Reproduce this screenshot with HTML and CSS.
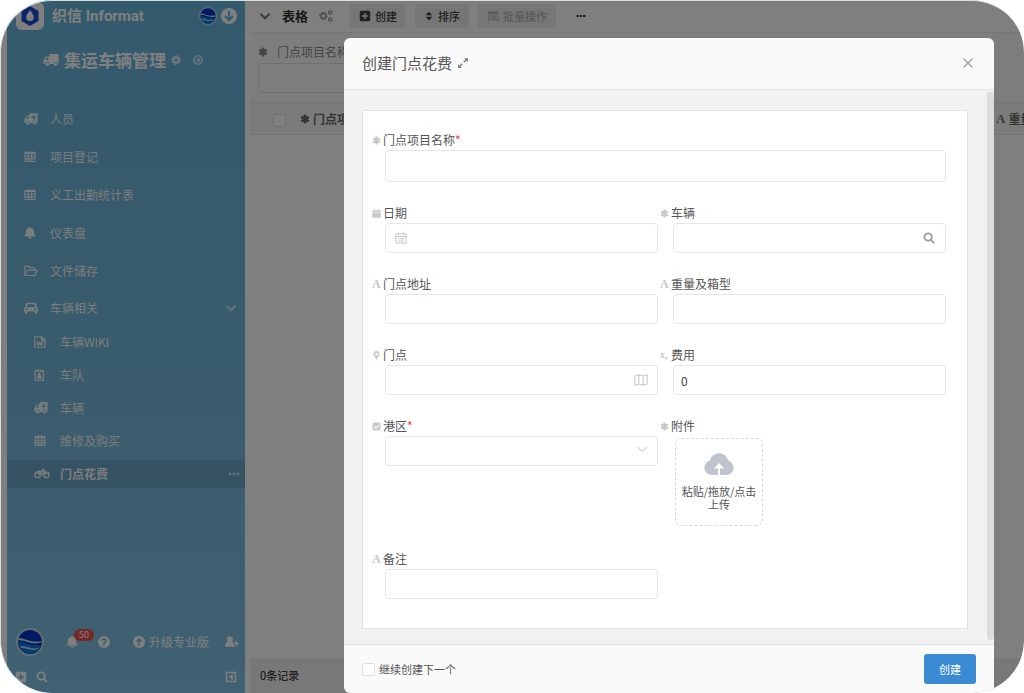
FILE: index.html
```html
<!DOCTYPE html>
<html lang="zh-CN">
<head>
<meta charset="utf-8">
<title>集运车辆管理</title>
<link rel="stylesheet" href="styles.css">
</head>
<body>
<svg class="sprite" aria-hidden="true">
  <symbol id="truck" viewBox="0 0 16 16"><path d="M6.500 2h9v10h-1a2 2 0 0 1-4 0h-4a2 2 0 0 1-4 0H.5V8L3 4.500h3.500z"/><path d="M2 8l1.600-2.300H5.300V8z" fill="#6ab6dc"/><circle cx="4.500" cy="12.300" r="2" stroke="#6ab6dc" stroke-width=".8"/><circle cx="12.500" cy="12.300" r="2" stroke="#6ab6dc" stroke-width=".8"/></symbol>
  <symbol id="ambulance" viewBox="0 0 16 16"><path d="M6.500 1.500h9v11h-1.500H.5V8L3 4h3.500z"/><path d="M2 7.500l1.600-2.300H5.300V7.500zM10.400 3.500h1.300v2h2v1.300h-2v2h-1.300v-2h-2V5.500h2z" fill="#6ab6dc"/><circle cx="4.500" cy="12.500" r="2.200" stroke="#6ab6dc" stroke-width=".6"/><circle cx="12" cy="12.500" r="2.200" stroke="#6ab6dc" stroke-width=".6"/></symbol>
  <symbol id="table" viewBox="0 0 16 16"><path fill-rule="evenodd" d="M2 1h12a1.500 1.500 0 0 1 1.500 1.500v10.500a1.500 1.500 0 0 1-1.500 1.500H2A1.500 1.500 0 0 1 .5 13V2.500A1.500 1.500 0 0 1 2 1zM2 4v2.200h3V4zM6.500 4v2.200h3V4zM11 4v2.200h3V4zM2 7.700v2h3v-2zM6.500 7.700v2h3v-2zM11 7.700v2h3v-2zM2 11.200v2h3v-2zM6.500 11.200v2h3v-2zM11 11.200v2h3v-2z"/></symbol>
  <symbol id="bell" viewBox="0 0 16 16"><path d="M7 1a1 1 0 0 1 2 0c3 .5 4.300 2.500 4.300 5 0 3.500 1 5 2.700 6.800H0C1.700 11 2.700 9.500 2.700 6c0-2.500 1.300-4.500 4.300-5z"/><path d="M5.700 13.300h4.600a2.300 2.300 0 0 1-4.600 0z"/></symbol>
  <symbol id="folder" viewBox="0 0 16 16"><path fill="none" stroke="currentColor" stroke-width="1.300" stroke-linejoin="round" d="M1 12.500V3.500A1 1 0 0 1 2 2.500h3l1.500 1.500H11a1 1 0 0 1 1 1v2M1 12.800L4 7.500a1 1 0 0 1 1-.5h10.200L12.500 12.500a1.500 1.500 0 0 1-1 .7H1.500z"/></symbol>
  <symbol id="car" viewBox="0 0 16 16"><path fill-rule="evenodd" d="M4 2h8c1 0 1.600.4 1.900 1.400L14.700 7c.8.300 1.300 1 1.300 1.900V12h-1v1.500a1.300 1.300 0 0 1-2.600 0V12H3.600v1.500a1.300 1.300 0 0 1-2.600 0V12H0V8.900C0 8 .5 7.300 1.300 7l.8-3.600C2.400 2.400 3 2 4 2zM4.100 3.700L3.300 6.800h9.400l-.8-3.100zM3 8.300a1.200 1.200 0 1 0 0 2.400 1.200 1.200 0 0 0 0-2.400zM13 8.300a1.200 1.200 0 1 0 0 2.400 1.200 1.200 0 0 0 0-2.400z"/></symbol>
  <symbol id="word" viewBox="0 0 16 16"><path fill="none" stroke="currentColor" stroke-width="1.600" stroke-linejoin="round" d="M1 1h9l4.500 4v10H1zM10 1v4.500h4M4 7l1.500 5.500L7.800 8l2.200 4.500L11.500 7"/></symbol>
  <symbol id="badge" viewBox="0 0 16 16"><path fill="none" stroke="currentColor" stroke-width="1.600" d="M1.500 2.500h11v12.500h-11z"/><path d="M3 .5h2.500v3H3zM8.500 .5H11v3H8.500zM3.500 12.500c0-2 .8-3.300 2-3.500a2.200 2.200 0 1 1 3 0c1.200.2 2 1.500 2 3.500z"/></symbol>
  <symbol id="moto" viewBox="0 0 18 16"><g fill="none" stroke="currentColor" stroke-width="1.500"><circle cx="4" cy="9" r="3"/><circle cx="14" cy="9" r="3"/><path d="M4 9l3-4h5M8.500 3H11l3 6M3 5.500c3-1.500 5 0 5.500 3.500L12 5"/></g></symbol>
  <symbol id="chevron" viewBox="0 0 16 16"><path fill="none" stroke="currentColor" stroke-width="2.600" d="M2 5l6 6 6-6"/></symbol>
  <symbol id="chevron-thin" viewBox="0 0 16 16"><path fill="none" stroke="currentColor" stroke-width="1.600" d="M1 5l7 7 7-7"/></symbol>
  <symbol id="dots" viewBox="0 0 16 16"><path d="M1 6.300h3.500v3.400H1zM6.250 6.300h3.500v3.400h-3.500zM11.500 6.300H15v3.400h-3.500z"/></symbol>
  <symbol id="gear" viewBox="0 0 16 16"><circle cx="8" cy="8" r="4.200" fill="none" stroke="currentColor" stroke-width="3.400"/><circle cx="8" cy="8" r="6.800" fill="none" stroke="currentColor" stroke-width="2.200" stroke-dasharray="2.800 2.540"/></symbol>
  <symbol id="gears" viewBox="0 0 16 16"><g fill="none" stroke="currentColor"><circle cx="5" cy="8" r="2.800" stroke-width="1.700"/><circle cx="5" cy="8" r="4.200" stroke-width="1.300" stroke-dasharray="1.600 1.700"/><circle cx="12.800" cy="4" r="1.900" stroke-width="1.600"/><circle cx="12.800" cy="12" r="1.900" stroke-width="1.600"/></g></symbol>
  <symbol id="circle-right" viewBox="0 0 16 16"><path fill="none" stroke="currentColor" stroke-width="2" d="M8 1.200a6.800 6.800 0 1 0 .1 0zM4 8h7M8 4.800L11.200 8 8 11.200"/></symbol>
  <symbol id="circle-down" viewBox="0 0 16 16"><circle cx="8" cy="8" r="8"/><path fill="none" stroke="#6ab6dc" stroke-width="2" d="M8 3v9M4 8l4 4 4-4"/></symbol>
  <symbol id="circle-up" viewBox="0 0 16 16"><circle cx="8" cy="8" r="8"/><path fill="none" stroke="#7abce0" stroke-width="2" d="M8 13V4M4.500 7.500L8 4l3.500 3.500"/></symbol>
  <symbol id="question" viewBox="0 0 16 16"><circle cx="8" cy="8" r="8"/><path fill="none" stroke="#7abce0" stroke-width="2" d="M5.300 6.200c.2-3.200 5.400-3 5.300 0C10.500 8 8 7.800 8 10.200M8 11.200v2"/></symbol>
  <symbol id="user-plus" viewBox="0 0 16 16"><path d="M5.500 1.500a3.300 3.300 0 0 1 2.200 5.900C10.200 8 11 10 11 13.500H0C0 10 .8 8 3.300 7.400A3.300 3.300 0 0 1 5.500 1.500z"/><path d="M11.800 6.500H14v2.100h2v2.200h-2v2.100h-2.200v-2.100H9.700V8.600h2.100z" stroke="#7abce0" stroke-width=".5"/></symbol>
  <symbol id="plus-square" viewBox="0 0 16 16"><path fill-rule="evenodd" d="M3 1h10a2 2 0 0 1 2 2v10a2 2 0 0 1-2 2H3a2 2 0 0 1-2-2V3a2 2 0 0 1 2-2zM7 4v3H4v2h3v3h2V9h3V7H9V4z"/></symbol>
  <symbol id="check-square" viewBox="0 0 16 16"><path d="M3 1h10a2 2 0 0 1 2 2v10a2 2 0 0 1-2 2H3a2 2 0 0 1-2-2V3a2 2 0 0 1 2-2z"/><path d="M4 8l3 3 5.500-5.500" fill="none" stroke="#fff" stroke-width="2"/></symbol>
  <symbol id="search" viewBox="0 0 16 16"><path fill="none" stroke="currentColor" stroke-width="2.300" d="M6.800 1.800a4.900 4.900 0 1 0 .1 0zM10.300 10.300l4.700 4.700"/></symbol>
  <symbol id="collapse" viewBox="0 0 16 16"><path fill="none" stroke="currentColor" stroke-width="2" d="M2 2h12v12H2z"/><path d="M10.500 4v8L5 8z"/></symbol>
  <symbol id="asterisk" viewBox="0 0 16 16"><path fill="none" stroke="currentColor" stroke-width="4.400" stroke-linecap="round" d="M8 2.800v10.400M3.500 5.400l9 5.200M3.500 10.600l9-5.200"/></symbol>
  <symbol id="sort" viewBox="0 0 16 16"><path d="M2.500 6.800L8 1l5.500 5.800zM2.500 9.200L8 15l5.500-5.800z"/></symbol>
  <symbol id="list" viewBox="0 0 16 16"><path fill-rule="evenodd" d="M1 2h14v12H1zM2.500 5v7.500h11V5zM4 6h1.500v1.400H4zM6.500 6H12v1.400H6.500zM4 8.200h1.500v1.400H4zM6.500 8.200H12v1.400H6.500zM4 10.300h1.500v1.400H4zM6.500 10.300H12v1.400H6.500z"/></symbol>
  <symbol id="expand" viewBox="0 0 16 16"><path d="M9.500 1.500h5V6.500zM1.500 9.500v5h5z"/><path fill="none" stroke="currentColor" stroke-width="1.800" d="M12.500 3.500L9 7M3.500 12.500L7 9"/></symbol>
  <symbol id="close" viewBox="0 0 16 16"><path fill="none" stroke="currentColor" stroke-width="1.500" d="M2 2l12 12M14 2L2 14"/></symbol>
  <symbol id="calendar" viewBox="0 0 16 16"><path d="M.5 2.500H3V.5h2.500v2h5v-2H13v2h2.500v3.200H.5zM.5 6.500h15V15.500H.5z"/></symbol>
  <symbol id="date" viewBox="0 0 16 16"><path fill="none" stroke="currentColor" stroke-width="1.300" d="M1.200 2.500h13.600v12.300H1.200zM1.200 6h13.600M4.500.7v3.500M11.500.7v3.500M4 9h8M4 12h8"/></symbol>
  <symbol id="pin" viewBox="0 0 16 16"><path fill-rule="evenodd" d="M8 0a5.500 5.500 0 0 1 5.500 5.500C13.500 9 9.500 11 8.600 15.500H7.400C6.500 11 2.500 9 2.500 5.500A5.500 5.500 0 0 1 8 0zM8 3.300a2.300 2.300 0 1 0 .1 0z"/></symbol>
  <symbol id="map" viewBox="0 0 16 14"><path fill="none" stroke="currentColor" stroke-width="1.300" stroke-linejoin="round" d="M1 2.500L5.500 1l5 1.500L15 1v10.500L10.500 13l-5-1.500L1 13zM5.500 1v10.500M10.500 2.500V13"/></symbol>
  <symbol id="cloud" viewBox="0 0 30 24"><path d="M7.500 23A7.300 7.300 0 0 1 6 8.600 9.200 9.200 0 0 1 24 8.600 7.300 7.300 0 0 1 22.500 23z"/><path fill="#fff" d="M15 11l5 5.500h-4V23h-2v-6.500h-4z"/></symbol>
  <symbol id="globe" viewBox="0 0 28 28"><circle cx="14" cy="14" r="14" fill="#c2dbe8"/><circle cx="14" cy="14" r="12" fill="#0034c8"/><path fill="#0a78e0" d="M2 13.500c7 0 12 5 23.500 3.500-1.500 5-6 8.700-11.500 8.700S3 21 2 13.500z"/><path fill="#c2dbe8" d="M2.500 10c6-.5 12 5.500 23.200 3v1.600C15 17.500 9 11.500 2.300 12.200zM4.500 18.500c6-1 11 4 18.500 1l-1 1.600c-7 2.500-12-1.400-17-1z"/></symbol>
</svg>

<div class="frame">
  <aside class="side">
    <header class="brand">
      <svg class="brand-logo" viewBox="0 0 28 28"><rect width="28" height="28" rx="6" fill="#fff"/><path d="M14 4l8.500 5v10L14 24l-8.500-5V9z" fill="#2148d8"/><path d="M14 8c2 3 3.800 5 3.800 7.200a3.800 3.800 0 0 1-7.600 0C10.200 13 12 11 14 8z" fill="#fff"/></svg>
      <strong class="brand-name">织信 Informat</strong>
      <svg class="icon i18"><use href="#globe"/></svg>
      <svg class="icon i16"><use href="#circle-down"/></svg>
    </header>
    <h1 class="app-name">
      <svg class="icon i16"><use href="#truck"/></svg>集运车辆管理<svg class="icon i10 dim"><use href="#gear"/></svg><svg class="icon i10 dim last"><use href="#circle-right"/></svg>
    </h1>
    <nav class="menu">
      <a href="#"><svg class="icon i14"><use href="#ambulance"/></svg>人员</a>
      <a href="#"><svg class="icon i12"><use href="#table"/></svg>项目登记</a>
      <a href="#"><svg class="icon i12"><use href="#table"/></svg>义工出勤统计表</a>
      <a href="#"><svg class="icon i12"><use href="#bell"/></svg>仪表盘</a>
      <a href="#"><svg class="icon i14"><use href="#folder"/></svg>文件储存</a>
      <a href="#" class="group"><svg class="icon i14"><use href="#car"/></svg>车辆相关<svg class="icon i12 end"><use href="#chevron"/></svg></a>
      <div class="submenu">
        <a href="#"><svg class="icon i12"><use href="#word"/></svg>车辆WIKI</a>
        <a href="#"><svg class="icon i12"><use href="#badge"/></svg>车队</a>
        <a href="#"><svg class="icon i14"><use href="#ambulance"/></svg>车辆</a>
        <a href="#"><svg class="icon i12"><use href="#table"/></svg>维修及购买</a>
        <a href="#" class="active"><svg class="icon i16"><use href="#moto"/></svg>门点花费<svg class="icon i12 end"><use href="#dots"/></svg></a>
      </div>
    </nav>
    <div class="side-tools">
      <svg class="icon avatar"><use href="#globe"/></svg>
      <span class="alerts"><svg class="icon i12"><use href="#bell"/></svg><span class="count">50</span></span>
      <svg class="icon i12 help"><use href="#question"/></svg>
      <a href="#" class="upgrade"><svg class="icon i12"><use href="#circle-up"/></svg>升级专业版</a>
      <svg class="icon i14 invite"><use href="#user-plus"/></svg>
    </div>
    <div class="side-foot">
      <svg class="icon i12"><use href="#plus-square"/></svg>
      <svg class="icon i12"><use href="#search"/></svg>
      <svg class="icon i12 end"><use href="#collapse"/></svg>
    </div>
  </aside>

  <main class="main">
    <div class="toolbar">
      <svg class="icon i12 fold"><use href="#chevron"/></svg>
      <h2>表格</h2>
      <svg class="icon i14 faint"><use href="#gears"/></svg>
      <button type="button" class="tool"><svg class="icon i12"><use href="#plus-square"/></svg>创建</button>
      <button type="button" class="tool"><svg class="icon i10"><use href="#sort"/></svg>排序</button>
      <button type="button" class="tool" disabled><svg class="icon i12"><use href="#list"/></svg>批量操作</button>
      <svg class="icon i10 more"><use href="#dots"/></svg>
    </div>
    <div class="filter">
      <label for="filter-name"><svg class="icon i10"><use href="#asterisk"/></svg>门点项目名称</label>
      <input id="filter-name" type="text">
    </div>
    <table class="grid">
      <thead><tr>
        <th class="pick"><input type="checkbox" aria-label="全选"></th>
        <th><span class="head"><svg class="icon i10"><use href="#asterisk"/></svg>门点项目名称</span></th>
        <th class="weight"><span class="head"><span class="glyph">A</span>重量及箱型</span></th>
      </tr></thead>
    </table>
    <footer class="records">0条记录</footer>
  </main>

  <div class="overlay">
    <form class="modal" role="dialog" aria-labelledby="dialog-title">
      <header class="modal-head">
        <h2 id="dialog-title">创建门点花费</h2>
        <svg class="icon i12"><use href="#expand"/></svg>
        <button type="button" class="close" aria-label="关闭"><svg class="icon i12"><use href="#close"/></svg></button>
      </header>
      <div class="modal-body">
        <div class="panel">
          <div class="field wide">
            <label for="name"><svg class="icon i9"><use href="#asterisk"/></svg><span>门点项目名称<em>*</em></span></label>
            <div class="box tall"><input id="name" type="text"></div>
          </div>
          <div class="field">
            <label for="day"><svg class="icon i9"><use href="#calendar"/></svg>日期</label>
            <div class="box"><svg class="icon i12 lead"><use href="#date"/></svg><input id="day" type="text"></div>
          </div>
          <div class="field">
            <label for="vehicle"><svg class="icon i9"><use href="#asterisk"/></svg>车辆</label>
            <div class="box"><input id="vehicle" type="text"><svg class="icon i12 find"><use href="#search"/></svg></div>
          </div>
          <div class="field">
            <label for="address"><span class="glyph">A</span>门点地址</label>
            <div class="box"><input id="address" type="text"></div>
          </div>
          <div class="field">
            <label for="load"><span class="glyph">A</span>重量及箱型</label>
            <div class="box"><input id="load" type="text"></div>
          </div>
          <div class="field">
            <label for="spot"><svg class="icon i9"><use href="#pin"/></svg>门点</label>
            <div class="box"><input id="spot" type="text"><svg class="icon i14 trail"><use href="#map"/></svg></div>
          </div>
          <div class="field">
            <label for="cost"><span class="glyph small">x<sub>s</sub></span>费用</label>
            <div class="box"><input id="cost" type="text" value="0"></div>
          </div>
          <div class="field">
            <label for="port"><svg class="icon i9"><use href="#check-square"/></svg><span>港区<em>*</em></span></label>
            <div class="box"><select id="port"><option></option></select><svg class="icon i10 arrow"><use href="#chevron-thin"/></svg></div>
          </div>
          <div class="field">
            <label for="upload"><svg class="icon i9"><use href="#asterisk"/></svg>附件</label>
            <button type="button" class="upload" id="upload"><svg class="cloud"><use href="#cloud"/></svg><span>粘贴/拖放/点击上传</span></button>
          </div>
          <div class="field">
            <label for="note"><span class="glyph">A</span>备注</label>
            <div class="box"><input id="note" type="text"></div>
          </div>
        </div>
        <div class="scroll"></div>
      </div>
      <footer class="modal-foot">
        <label><input type="checkbox">继续创建下一个</label>
        <button type="submit" class="primary">创建</button>
      </footer>
    </form>
  </div>
</div>
</body>
</html>
```

FILE: styles.css
```css
* { box-sizing: border-box; }
body {
  margin: 0;
  background: #fff;
  color: #555;
  font: 12px/20px "Noto Sans CJK SC", sans-serif;
}
button, input, select { font: inherit; color: inherit; }
a { color: inherit; text-decoration: none; }
h1, h2 { margin: 0; }
.sprite { display: none; }
.icon { flex: none; fill: currentColor; width: 12px; height: 12px; }
.i9 { width: 9px; height: 9px; }
.i10 { width: 10px; height: 10px; }
.i12 { width: 12px; height: 12px; }
.i14 { width: 14px; height: 14px; }
.i16 { width: 16px; height: 16px; }
.i18 { width: 18px; height: 18px; }
.end { margin-left: auto; }

.frame {
  position: relative;
  display: flex;
  height: 100vh;
  min-height: 640px;
  overflow: hidden;
  border-radius: 52px;
  background: #fff;
}

/* sidebar */
.side {
  flex: none;
  display: flex;
  flex-direction: column;
  width: 245px;
  border-left: 7px solid #fff;
  background: linear-gradient(#68b4da, #74b8d8 55%, #80c2e4);
  color: #fff;
}
.brand {
  display: flex;
  align-items: center;
  gap: 4px;
  height: 34px;
  padding: 0 8px 2px 9px;
  border-bottom: 1px solid #72b9dc;
}
.brand-logo { width: 28px; height: 28px; margin-right: 4px; }
.brand-name {
  margin-right: auto;
  font: bold 15px/20px Roboto, "Noto Sans CJK SC", sans-serif;
}
.app-name {
  display: flex;
  align-items: center;
  gap: 5px;
  height: 51px;
  padding-left: 36px;
  font-size: 17px;
  line-height: 24px;
}
.dim { opacity: .8; }
.last { margin-left: 7px; }
.menu { flex: 1; padding-top: 15px; opacity: .92; }
.menu a { display: flex; align-items: center; height: 38px; padding: 0 8px 0 17px; }
.menu .icon { margin-right: 12px; }
.menu .i12 { margin-right: 14px; }
.menu .end { margin-right: 0; opacity: .7; }
.menu .group { height: 36px; }
.submenu { display: flex; flex-direction: column; gap: 5px; padding-top: 2px; }
.submenu a { height: 28px; padding: 0 5px 0 27px; }
.submenu .i16 { margin-right: 10px; }
.submenu .active { background: #6aa6c4; font-weight: bold; }
.side-tools {
  display: flex;
  align-items: center;
  height: 36px;
  padding: 0 6px 0 9px;
  border-top: 1px solid #84c4e4;
}
.side-tools .avatar { width: 28px; height: 28px; }
.alerts { position: relative; display: flex; margin-left: 22px; }
.count {
  position: absolute;
  left: 8px;
  bottom: 7px;
  padding: 0 5px;
  border-radius: 6px;
  background: #f05050;
  font-size: 9px;
  line-height: 12px;
}
.help { margin-left: 20px; }
.upgrade { display: flex; align-items: center; gap: 4px; margin-left: 23px; }
.invite { margin-left: auto; }
.side-foot {
  display: flex;
  align-items: center;
  gap: 9px;
  height: 34px;
  padding: 0 8px;
  border-top: 1px solid #84c4e4;
}

/* table page */
.main {
  flex: 1;
  display: flex;
  flex-direction: column;
  min-width: 0;
  border-left: 5px solid #fff;
}
.toolbar {
  display: flex;
  align-items: center;
  height: 33px;
  padding: 0 9px 1px;
  border-bottom: 1px solid #eee;
}
.fold { color: #777; }
.toolbar h2 { margin: 0 11px; font-size: 13px; line-height: 20px; color: #333; }
.faint { margin-right: 17px; color: #999; }
.tool {
  display: flex;
  align-items: center;
  gap: 4px;
  height: 24px;
  margin-right: 9px;
  padding: 0 9px;
  border: 0;
  border-radius: 4px;
  background: #ececee;
  color: #444;
  font-size: 11px;
  font-weight: 500;
}
.tool:disabled { color: #b4b4b4; }
.more { margin-left: 11px; color: #333; }
.filter { height: 69px; padding: 8px; background: #fbfbfb; }
.filter label { display: flex; align-items: center; gap: 9px; height: 22px; color: #888; }
.filter input {
  width: 280px;
  height: 30px;
  border: 1px solid #e2e2e2;
  border-radius: 4px;
  background: none;
}
.grid { width: 100%; table-layout: fixed; border-collapse: collapse; background: #f6f6f6; }
.grid th {
  height: 32px;
  padding: 0;
  border-top: 1px solid #e6e6e6;
  border-bottom: 1px solid #e6e6e6;
  color: #666;
}
.grid .pick { width: 50px; padding-left: 9px; }
.grid .weight { width: 28px; }
.head { display: flex; align-items: center; gap: 3px; white-space: nowrap; }
.head .glyph { width: auto; font: bold 13px/20px "Liberation Serif", serif; color: #777; }
input[type="checkbox"] {
  flex: none;
  width: 13px;
  height: 13px;
  margin: 0;
  border: 1px solid #dcdfe6;
  border-radius: 2px;
  background: #fff;
  appearance: none;
}
.grid input { vertical-align: middle; }
.records {
  height: 35px;
  margin-top: auto;
  padding: 7px 10px;
  background: #f0f0f0;
  color: #444;
  font-weight: 500;
  font-size: 11px;
}

/* dialog */
.overlay {
  position: absolute;
  inset: 0;
  display: flex;
  padding: 38px 30px 0 344px;
  border-top: 1px solid #d8dede;
  border-left: 1px solid #d8dede;
  border-radius: 52px;
  background: rgba(0, 0, 0, .5);
  background-clip: border-box;
}
.overlay { padding: 37px 30px 0 343px; }
.modal {
  flex: 1;
  display: flex;
  flex-direction: column;
  min-width: 0;
  overflow: hidden;
  border-radius: 6px;
  background: #fafafa;
}
.modal-head {
  display: flex;
  align-items: center;
  gap: 5px;
  height: 52px;
  padding: 0 20px 2px 18px;
  border-bottom: 1px solid #e2e2e2;
}
.modal-head .icon { color: #777; }
.modal-head h2 { font-size: 15px; line-height: 24px; font-weight: 400; }
.close {
  display: flex;
  margin-left: auto;
  padding: 0;
  border: 0;
  background: none;
}
.modal-head .close .icon { color: #999; }
.modal-body {
  flex: 1;
  display: flex;
  align-items: flex-start;
  min-height: 0;
  padding: 20px 0 0 18px;
  background: #f2f2f2;
}
.scroll {
  flex: none;
  align-self: stretch;
  width: 7px;
  margin: -18px 0 4px 19px;
  border-radius: 4px;
  background: #dcdcdc;
}
.panel {
  flex: 1;
  display: grid;
  grid-template-columns: 1fr 1fr;
  gap: 21px 2px;
  padding: 19px 21px 29px 9px;
  border: 1px solid #e2e2e2;
  background: #fff;
}
.wide { grid-column: 1 / -1; }
.field { padding-left: 13px; }
.field label { display: flex; align-items: center; gap: 2px; height: 20px; margin-left: -13px; }
.field label .icon, .field .glyph { color: #c8c8c8; }
.field em { color: #f33; font-style: normal; }
.glyph { width: 9px; font: bold 12px/20px "Liberation Serif", serif; }
.field .small { font-size: 10px; white-space: nowrap; }
.small sub { font-size: 7px; line-height: 0; vertical-align: -2px; }
.box {
  display: flex;
  align-items: center;
  height: 30px;
  padding: 0 7px;
  border: 1px solid #e4e6ee;
  border-radius: 4px;
}
.tall { height: 32px; }
.box input, .box select {
  flex: 1;
  min-width: 0;
  height: 26px;
  padding: 0;
  border: 0;
  outline: 0;
  background: none;
  color: #444;
  appearance: none;
}
.lead { margin: 0 8px 0 2px; color: #c0c4cc; }
.find { margin-right: 3px; color: #999; }
.trail { margin-right: 2px; color: #c8c8c8; }
.arrow { margin: 0 3px 4px 0; color: #b4b8c0; }
.upload {
  display: flex;
  flex-direction: column;
  align-items: center;
  gap: 9px;
  width: 88px;
  height: 88px;
  margin: 2px;
  padding: 13px 4px 0;
  border: 1px dashed #d9d9d9;
  border-radius: 6px;
  background: #fff;
  font-size: 11px;
  line-height: 13px;
}
.cloud { flex: none; width: 30px; height: 24px; fill: #c0c4cc; }
.modal-foot {
  display: flex;
  align-items: center;
  justify-content: space-between;
  height: 49px;
  padding: 0 18px;
  border-top: 1px solid #e2e2e2;
}
.modal-foot label { display: flex; align-items: center; gap: 4px; font-size: 11px; }
.primary {
  height: 30px;
  padding: 0 15px;
  border: 0;
  border-radius: 3px;
  background: #3a8ad4;
  color: #fff;
  font-size: 11px;
}
```
